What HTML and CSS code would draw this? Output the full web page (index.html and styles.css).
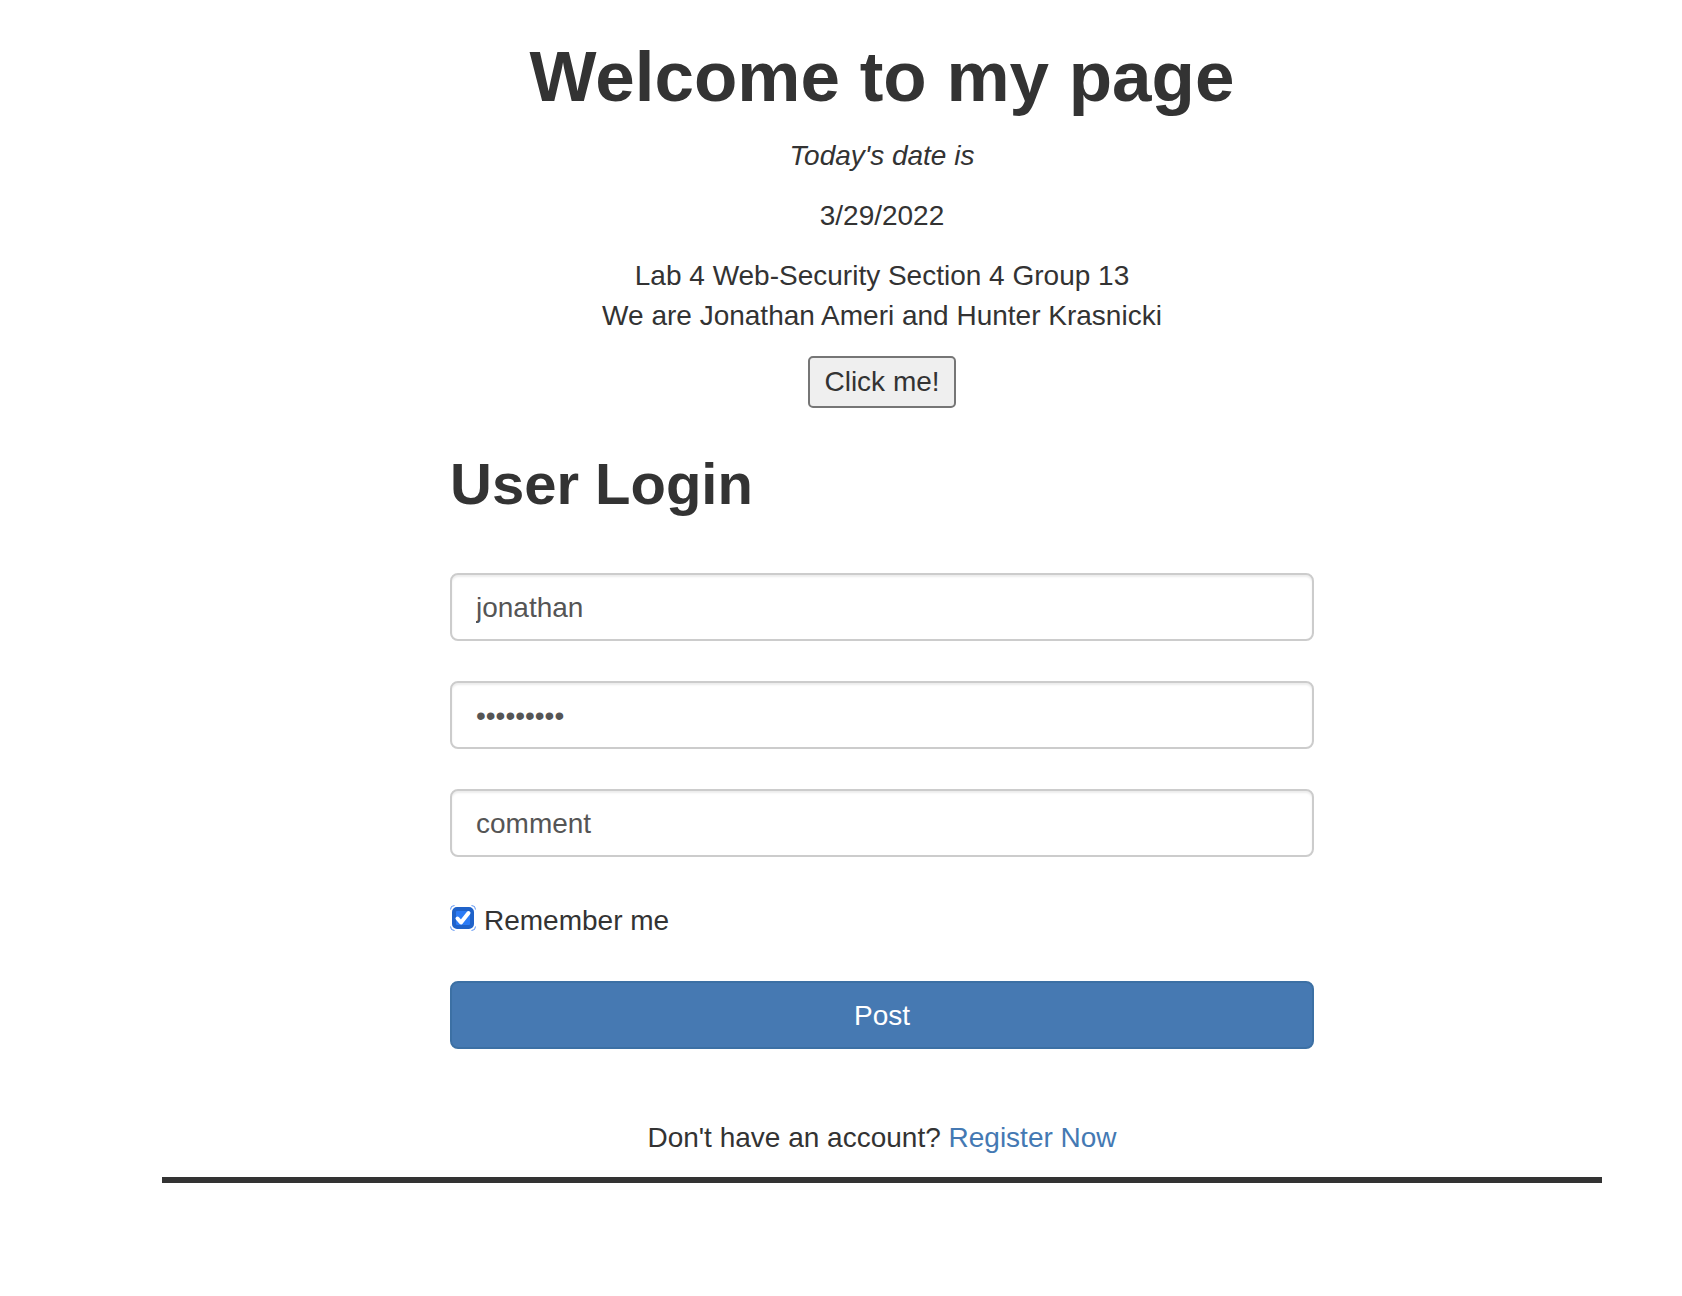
FILE: index.html
```html
<!DOCTYPE html>
<html lang="en">
<head>
  <meta charset="utf-8">
  <meta name="viewport" content="width=device-width, initial-scale=1">
  <title>Welcome to my page</title>
  <link rel="stylesheet" href="styles.css">
</head>
<body>
  <main class="page">
    <header class="intro">
      <h1 class="title">Welcome to my page</h1>
      <p class="line"><em>Today's date is</em></p>
      <p class="line">3/29/2022</p>
      <p class="line">Lab 4 Web-Security Section 4 Group 13<br>We are Jonathan Ameri and Hunter Krasnicki</p>
      <button class="click-button" type="button">Click me!</button>
    </header>

    <form class="login">
      <h2 class="login-title">User Login</h2>
      <div class="fields">
        <input class="field" type="text" name="username" value="jonathan" aria-label="Username">
        <input class="field" type="password" name="password" value="ninechars" aria-label="Password">
        <input class="field" type="text" name="comment" value="comment" aria-label="Comment">
      </div>
      <label class="remember" for="remember">
        <span class="check">
          <input class="check-input" type="checkbox" id="remember" name="remember" checked>
          <svg class="check-mark" viewBox="0 0 26 26" aria-hidden="true">
            <rect x="4" y="4" width="18" height="18" rx="3" fill="#2b7bf6" stroke="#1f62c9" stroke-width="4"/>
            <path d="M7.500 13.500l3.500 4L18.500 8" fill="none" stroke="#fff" stroke-width="4" stroke-linecap="round" stroke-linejoin="round"/>
            <path d="M.5 4.500Q.5.5 4.500.5M21.500.5q4 0 4 4M25.500 21.500q0 4-4 4M4.500 25.500q-4 0-4-4" fill="none" stroke="#5c93f2" stroke-width="1"/>
          </svg>
        </span>
        Remember me
      </label>
      <button class="post-button" type="submit">Post</button>
    </form>

    <p class="register">Don't have an account? <a class="register-link" href="#register">Register Now</a></p>
  </main>
</body>
</html>
```

FILE: styles.css
```css
*,
*::before,
*::after {
  box-sizing: border-box;
}

body {
  margin: 0;
  background: #fff;
  color: #333;
  font-family: "Liberation Sans", Arial, sans-serif;
  font-size: 28px;
  line-height: 40px;
}

button,
input {
  margin: 0;
  color: inherit;
  font: inherit;
}

.page {
  margin: 0 80px 0 162px;
  padding: 36px 0 19px;
  border-bottom: 6px solid #333;
}

.intro {
  display: flex;
  flex-direction: column;
  align-items: center;
  text-align: center;
}

.title,
.login-title {
  margin: 0;
  font-weight: 700;
}

.title {
  margin-bottom: 18px;
  font-size: 71px;
  line-height: 82px;
}

.line {
  margin: 0 0 20px;
}

.click-button {
  padding: 4px 14px;
  border: 2px solid #767676;
  border-radius: 5px;
  background: #efefef;
}

.login {
  display: flex;
  flex-direction: column;
  width: 60%;
  margin: 43px auto 69px;
}

.login-title {
  margin-bottom: 56px;
  font-size: 58px;
  line-height: 66px;
}

.fields {
  display: grid;
  gap: 40px;
  margin-bottom: 44px;
}

.field {
  width: 100%;
  height: 68px;
  padding: 14px 24px 12px;
  border: 2px solid #ccc;
  border-radius: 8px;
  outline: 0;
  background: #fff;
  box-shadow: inset 0 2px 2px rgba(0, 0, 0, 0.075);
  color: #555;
}

.remember {
  display: flex;
  gap: 8px;
  margin-bottom: 40px;
}

.check {
  position: relative;
  width: 26px;
  height: 26px;
  margin-top: 4px;
}

.check-input {
  display: block;
  width: 100%;
  height: 100%;
  appearance: none;
}

.check-mark {
  position: absolute;
  inset: 0;
  pointer-events: none;
}

.post-button {
  height: 68px;
  padding: 2px 24px 0;
  border: 2px solid #3c70a4;
  border-radius: 8px;
  background: #4679b2;
  color: #fff;
}

.register {
  margin: 0;
  text-align: center;
}

.register-link {
  color: #4479b3;
  text-decoration: none;
}
```
